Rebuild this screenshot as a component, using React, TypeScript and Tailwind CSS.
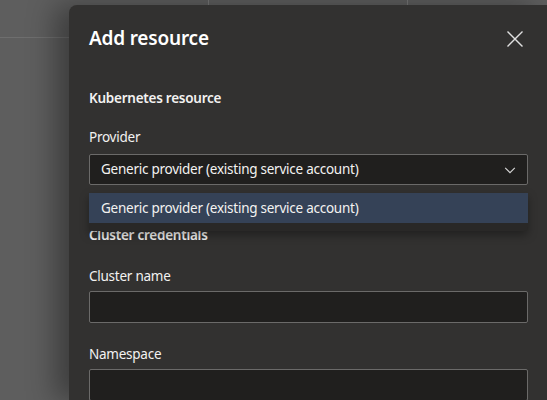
import React from 'react';

function ChevronDown() {
  return (
    <svg width="14" height="14" viewBox="0 0 16 16" fill="none" stroke="#d6d6d6" strokeWidth="1.3">
      <path d="M2.5 5.5 L8 11 L13.5 5.5" />
    </svg>
  );
}

function CloseIcon() {
  return (
    <svg width="18" height="18" viewBox="0 0 18 18" fill="none" stroke="#e0e0e0" strokeWidth="1.4">
      <path d="M1.5 1.5 L16.5 16.5 M16.5 1.5 L1.5 16.5" />
    </svg>
  );
}

function Field({ label }: { label: string }) {
  return (
    <div className="flex flex-col">
      <label className="text-[13.5px] tracking-[-0.25px] leading-[20px] text-[#f3f2f1] mb-[5px]">{label}</label>
      <div className="h-[32px] rounded-[2px] border border-[#6b6a69] bg-[#201f1e]" />
    </div>
  );
}

export default function App() {
  const provider = 'Generic provider (existing service account)';
  return (
    <div
      className="relative w-[547px] h-[400px] overflow-hidden bg-[#5e5e5e]"
      style={{ fontFamily: '"Noto Sans", "Open Sans", sans-serif' }}
    >
      {/* page behind the dialog */}
      <div className="h-[38px] border-b border-[#6e6e6e] flex">
        <div className="w-[209px] h-[5px] border-r border-[#777]" />
        <div className="w-[199px] h-[5px] border-r border-[#777]" />
      </div>

      {/* dialog panel */}
      <div className="absolute left-[69px] top-[5px] right-0 bottom-0 rounded-tl-[8px] bg-[#323130] shadow-[-14px_0_28px_rgba(0,0,0,0.35)] pl-[20px] pr-[19px]">
        <div className="flex items-center justify-between pt-[13px] h-[53px]">
          <h1 className="text-[19px] tracking-[-0.2px] font-semibold text-white leading-[28px]">Add resource</h1>
          <button className="mr-[4px] mt-[2px]">
            <CloseIcon />
          </button>
        </div>

        <div className="pt-[30px] text-[13.5px] tracking-[-0.25px] font-semibold leading-[20px] text-[#f3f2f1]">Kubernetes resource</div>

        <div className="mt-[19px] flex flex-col">
          <label className="text-[13.5px] tracking-[-0.25px] leading-[20px] text-[#f3f2f1] mb-[7px]">Provider</label>
          <div className="relative">
            <div className="h-[31px] rounded-[2px] border border-[#6b6a69] bg-[#201f1e] flex items-center justify-between pl-[11px] pr-[10px]">
              <span className="text-[13.5px] tracking-[-0.25px] text-[#f3f2f1]">{provider}</span>
              <ChevronDown />
            </div>
            <div className="absolute left-0 right-0 top-[39px] z-10 rounded-b-[4px] bg-[#292827] pb-[8px] shadow-[0_4px_10px_rgba(0,0,0,0.35)]">
              <div className="h-[30px] bg-[#354257] flex items-center pl-[12px] text-[13.5px] tracking-[-0.25px] text-[#f3f2f1]">{provider}</div>
            </div>
          </div>
        </div>

        <div className="mt-[40px] text-[13.5px] tracking-[-0.25px] font-semibold leading-[20px] text-[#f3f2f1]">Cluster credentials</div>

        <div className="mt-[21px] flex flex-col gap-[21px]">
          <Field label="Cluster name" />
          <Field label="Namespace" />
        </div>
      </div>
    </div>
  );
}
